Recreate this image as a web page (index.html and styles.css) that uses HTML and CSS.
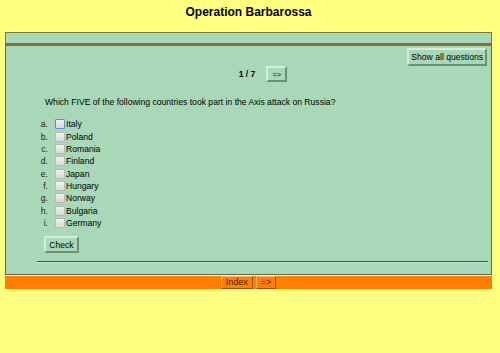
FILE: index.html
```html
<!DOCTYPE html>
<html lang="en">
<head>
    <meta charset="UTF-8">
    <title>Operation Barbarossa</title>
    <link rel="stylesheet" href="styles.css">
</head>
<body>
    <h2 class="title">Operation Barbarossa</h2>

    <div class="top-bar"></div>

    <div class="main-box">
        <div class="tools">
            <button class="btn">Show all questions</button>
        </div>

        <div class="counter">
            <span class="count">1 / 7</span>
            <button class="btn small">=&gt;</button>
        </div>

        <p class="question">Which FIVE of the following countries took part in the Axis attack on Russia?</p>

        <div class="options">
            <label class="opt"><span class="letter">a.</span><input type="checkbox" class="first"><span>Italy</span></label>
            <label class="opt"><span class="letter">b.</span><input type="checkbox"><span>Poland</span></label>
            <label class="opt"><span class="letter">c.</span><input type="checkbox"><span>Romania</span></label>
            <label class="opt"><span class="letter">d.</span><input type="checkbox"><span>Finland</span></label>
            <label class="opt"><span class="letter">e.</span><input type="checkbox"><span>Japan</span></label>
            <label class="opt"><span class="letter">f.</span><input type="checkbox"><span>Hungary</span></label>
            <label class="opt"><span class="letter">g.</span><input type="checkbox"><span>Norway</span></label>
            <label class="opt"><span class="letter">h.</span><input type="checkbox"><span>Bulgaria</span></label>
            <label class="opt"><span class="letter">i.</span><input type="checkbox"><span>Germany</span></label>
        </div>

        <button class="btn check">Check</button>

        <div class="rule"></div>
    </div>

    <div class="nav-bar">
        <button class="nav-btn">Index</button>
        <button class="nav-btn">=&gt;</button>
    </div>
</body>
</html>
```

FILE: styles.css
```css
* {
    box-sizing: border-box;
}

body {
    margin: 0;
    padding: 0 8px 0 5px;
    background-color: #ffff80;
    font-family: "Liberation Sans", Arial, sans-serif;
    font-size: 8.6px;
    color: #000;
}

.title {
    margin: 0;
    padding-top: 5px;
    height: 32px;
    text-align: center;
    font-size: 12px;
    font-weight: 700;
}

.top-bar {
    height: 11px;
    background-color: #a8d8b8;
    border: 1px solid #7c7840;
    border-bottom: none;
}

.main-box {
    background-color: #a8d8b8;
    border: 1px solid #5e6a48;
    border-top: 3px solid #7c7040;
    padding: 2px 3px 11px 4px;
}

.tools {
    display: flex;
    justify-content: flex-end;
    padding-right: 1px;
}

.btn {
    font-family: "Liberation Sans", Arial, sans-serif;
    font-size: 8.6px;
    color: #000;
    background-color: #a8d8b8;
    border: 2px solid;
    border-color: #d4eedc #6e8e78 #6e8e78 #d4eedc;
    padding: 0 2px;
    height: 18px;
    cursor: pointer;
}

.counter {
    display: flex;
    justify-content: center;
    align-items: center;
    gap: 11px;
    padding-left: 28px;
}

.count {
    font-weight: 700;
}

.btn.small {
    width: 21px;
    height: 16px;
    padding: 0;
    font-size: 7.5px;
}

.question {
    margin: 14px 0 9px 35px;
    line-height: 13px;
}

.options {
    display: flex;
    flex-direction: column;
    padding-left: 25px;
}

.opt {
    display: flex;
    align-items: center;
    height: 12.35px;
}

.letter {
    width: 20px;
    text-align: right;
    padding-right: 7px;
    color: #222;
}

.opt input {
    appearance: none;
    width: 10px;
    height: 10px;
    margin: 0 1px 0 0;
    border: 1px solid #b8b8b8;
    background: linear-gradient(#f2f2f2, #d8d8d8);
    border-radius: 1px;
}

.opt input.first {
    border-color: #6a8ad8;
}

.btn.check {
    margin: 7px 0 0 34px;
    height: 17px;
    width: 35px;
    padding: 0;
}

.rule {
    margin: 8px 0 0 27px;
    border-top: 1px solid #3f5a44;
    border-bottom: 1px solid #c0e4cc;
}

.nav-bar {
    margin-top: 1px;
    height: 13px;
    background-color: #ff8000;
    display: flex;
    justify-content: center;
    gap: 3px;
}

.nav-btn {
    font-family: "Liberation Sans", Arial, sans-serif;
    font-size: 9px;
    color: #402000;
    background-color: #ff8000;
    border: 1px solid;
    border-color: #ffb060 #a04c00 #a04c00 #ffb060;
    height: 13px;
    padding: 0 4px;
    line-height: 11px;
    cursor: pointer;
}
```
